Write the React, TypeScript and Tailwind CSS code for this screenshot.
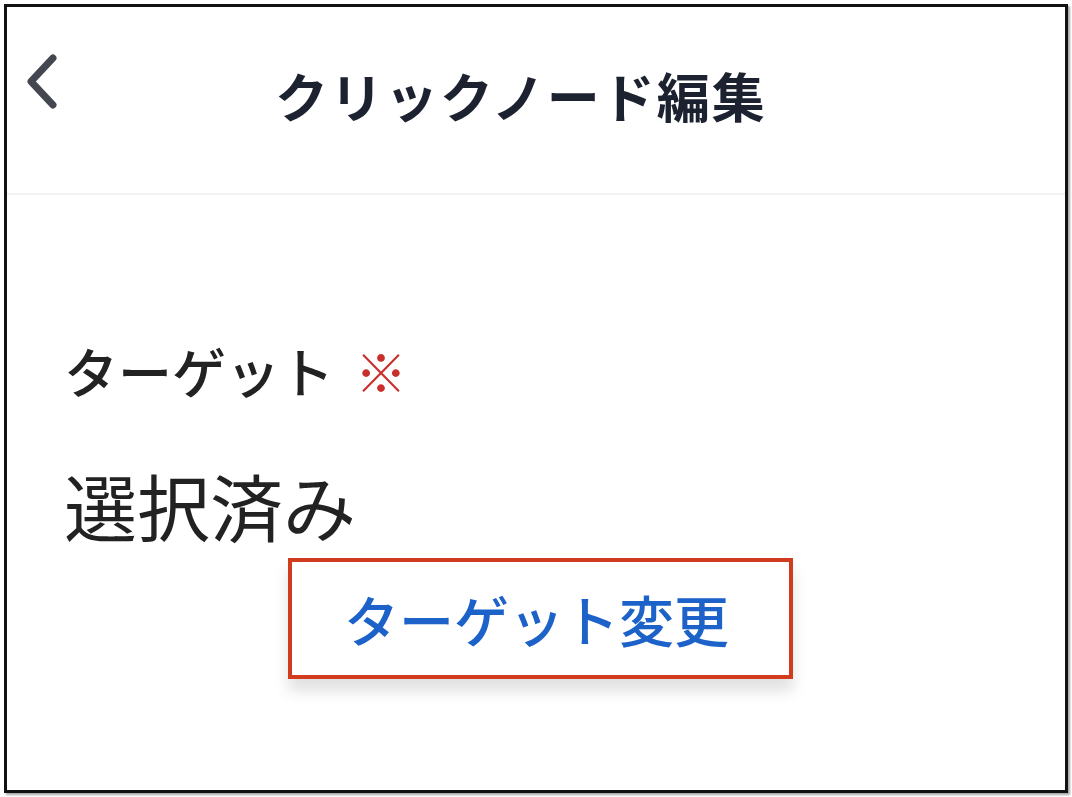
import React from "react";

const BackIcon = () => (
  <svg width="40" height="60" viewBox="0 0 40 60" fill="none">
    <path
      d="M32 6 L10 29.5 L32 53"
      stroke="#44474f"
      strokeWidth="7"
      strokeLinecap="round"
      strokeLinejoin="round"
    />
  </svg>
);

const App = () => {
  return (
    <div className="w-[1072px] h-[797px] bg-white p-[4px] font-['Noto_Sans_CJK_JP',sans-serif]">
      <div className="w-[1064px] h-[789px] border-[3px] border-[#111] shadow-[2px_2px_2px_rgba(0,0,0,0.35)] flex flex-col">
        <header className="h-[188px] flex flex-row items-start border-b-2 border-[#f2f2f2]">
          <div className="pl-[14px] pt-[45px]">
            <BackIcon />
          </div>
          <h1 className="ml-[214px] mt-[62px] text-[53px] leading-none font-bold text-[#1d2230] tracking-[2px]">
            クリックノード編集
          </h1>
        </header>

        <main className="flex flex-col pl-[57px]">
          <div className="mt-[149px] flex flex-row items-center text-[54px] leading-none font-medium text-[#222]">
            <span>ターゲット</span>
            <span className="ml-[21px] text-[#c9302c] text-[52px] font-normal">※</span>
          </div>
          <p className="mt-[70px] text-[73px] leading-none text-[#222]">
            選択済み
          </p>
          <div className="mt-[17px] ml-[224px]">
            <button className="w-[505px] h-[121px] border-[4px] border-[#d13b1e] bg-white text-[#1c62c8] text-[55px] leading-none font-medium pr-[8px] shadow-[0_12px_14px_rgba(0,0,0,0.12)] flex items-center justify-center">
              ターゲット変更
            </button>
          </div>
        </main>
      </div>
    </div>
  );
};

export default App;
